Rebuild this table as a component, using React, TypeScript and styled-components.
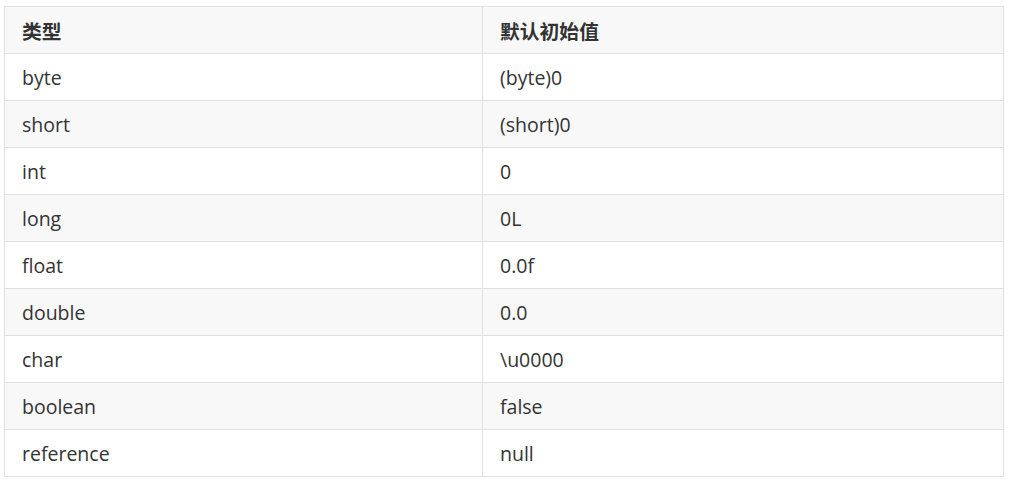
import React from "react";
import styled, { createGlobalStyle } from "styled-components";

const Global = createGlobalStyle`
  html, body { margin: 0; padding: 0; background: #ffffff; }
  body { font-family: "Open Sans", "Noto Sans CJK SC", sans-serif; color: #333333; }
`;

const Wrap = styled.div`
  padding: 6px 0 0 4px;
`;

const Table = styled.table`
  border-collapse: collapse;
  border-spacing: 0;
  width: 999px;
  table-layout: fixed;
  font-size: 19.5px;
`;

const Row = styled.tr<{ $alt?: boolean }>`
  background: ${(p) => (p.$alt ? "#f8f8f8" : "#ffffff")};
`;

const HeadCell = styled.th<{ $w: number }>`
  width: ${(p) => p.$w}px;
  height: 47px;
  box-sizing: border-box;
  border: 1px solid #dfe2e5;
  padding: 0 16px 0 17px;
  text-align: left;
  font-weight: 700;
  font-size: 19.8px;
  color: #333333;
  background: #f8f8f8;
  font-family: "Open Sans", "Noto Sans CJK SC", sans-serif;
`;

const Cell = styled.td`
  height: 47px;
  box-sizing: border-box;
  border: 1px solid #dfe2e5;
  padding: 0 16px 0 17px;
  color: #333333;
`;

const rows: [string, string][] = [
  ["byte", "(byte)0"],
  ["short", "(short)0"],
  ["int", "0"],
  ["long", "0L"],
  ["float", "0.0f"],
  ["double", "0.0"],
  ["char", "\\u0000"],
  ["boolean", "false"],
  ["reference", "null"],
];

export default function App() {
  return (
    <Wrap>
      <Global />
      <Table>
        <thead>
          <tr>
            <HeadCell $w={478}>类型</HeadCell>
            <HeadCell $w={521}>默认初始值</HeadCell>
          </tr>
        </thead>
        <tbody>
          {rows.map(([t, v], i) => (
            <Row key={t} $alt={i % 2 === 1}>
              <Cell>{t}</Cell>
              <Cell>{v}</Cell>
            </Row>
          ))}
        </tbody>
      </Table>
    </Wrap>
  );
}
